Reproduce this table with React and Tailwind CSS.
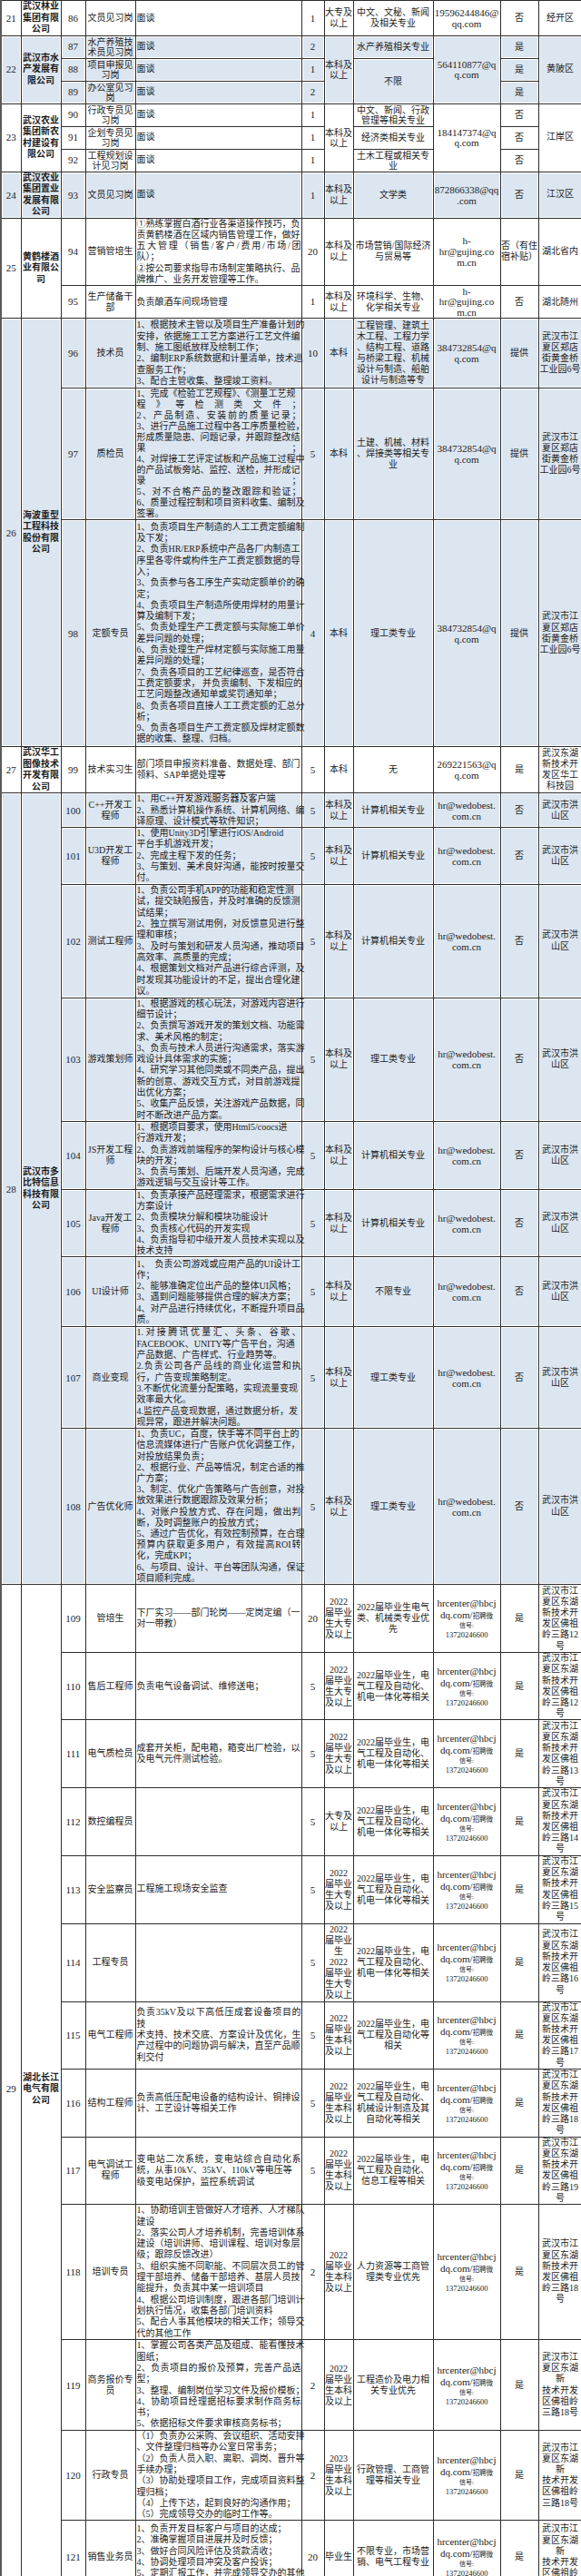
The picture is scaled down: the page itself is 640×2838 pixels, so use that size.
import React from "react";

// merged cell helper: text + rowSpan
const S = (t, s) => ({ t, s });
const HC = "HC";

const LOC29 = (n) => "武汉市江\n夏区东湖\n新技术开\n发区佛祖\n岭三路" + n + "\n号";
const LOC29B = (n) => "武汉市江\n夏区东湖\n新\n技术开发\n区佛祖岭\n三路" + n + "号";
const E22 = "2022\n届毕业\n生大专\n及以上";
const B22 = "2022\n届毕业\n生本科\n及以上";
const M_ELEC = "2022届毕业生，电\n气工程及自动化、\n机电一体化等相关";
const LOC26 = "武汉市江\n夏区郑店\n街黄金桥\n工业园6号";
const WEDO = "hr@wedobest.\ncom.cn";

const groups = [
  {
    no: 21,
    name: "武汉林业\n集团有限\n公司",
    rows: [
      { h: "h-[37px]", id: 86, job: "文员见习岗", desc: "面谈", n: "1", edu: "大专及\n以上", major: "中文、文秘、新闻\n及相关专业", email: "19596244846@\nqq.com", stay: "否", loc: "经开区" },
    ],
  },
  {
    no: 22,
    blue: true,
    name: "武汉市水\n产发展有\n限公司",
    rows: [
      { h: "h-[25px] leading-[11px]", id: 87, job: "水产养殖技\n术员见习岗", desc: "面谈", n: "2", edu: S("本科及\n以上", 3), major: "水产养殖相关专业", email: S("564110877@q\nq.com", 3), stay: "是", loc: S("黄陂区", 3) },
      { h: "h-[25px] leading-[11px]", id: 88, job: "项目申报见\n习岗", desc: "面谈", n: "1", edu: null, major: S("不限", 2), email: null, stay: "是", loc: null },
      { h: "h-[25px] leading-[11px]", id: 89, job: "办公室见习\n岗", desc: "面谈", n: "2", edu: null, major: null, email: null, stay: "是", loc: null },
    ],
  },
  {
    no: 23,
    name: "武汉农业\n集团新农\n村建设有\n限公司",
    rows: [
      { h: "h-[25px] leading-[11px]", id: 90, job: "行政专员见\n习岗", desc: "面谈", n: "1", edu: S("本科及\n以上", 3), major: "中文、新闻、行政\n管理等相关专业", email: S("184147374@q\nq.com", 3), stay: "否", loc: S("江岸区", 3) },
      { h: "h-[25px] leading-[11px]", id: 91, job: "企划专员见\n习岗", desc: "面谈", n: "1", edu: null, major: "经济类相关专业", email: null, stay: "否", loc: null },
      { h: "h-[25px] leading-[11px]", id: 92, job: "工程规划设\n计见习岗", desc: "面谈", n: "1", edu: null, major: "土木工程或相关专\n业", email: null, stay: "否", loc: null },
    ],
  },
  {
    no: 24,
    blue: true,
    name: "武汉农业\n集团置业\n发展有限\n公司",
    rows: [
      { h: "h-[50px]", id: 93, job: "文员见习岗", desc: "面谈", n: "1", edu: "本科及\n以上", major: "文学类", email: "872866338@qq\n.com", stay: "否", loc: "江汉区" },
    ],
  },
  {
    no: 25,
    name: "黄鹤楼酒\n业有限公\n司",
    rows: [
      {
        h: "h-[74px]", id: 94, job: "营销管培生",
        desc: "①熟练掌握白酒行业各渠道操作技巧，负\n责黄鹤楼酒在区域内销售管理工作，做好\n^五大管理（销售/客户/费用/市场/团\n队）；\n②按公司要求指导市场制定策略执行、品\n牌推广、业务开发管理等工作。",
        n: "20", edu: "本科及\n以上", major: "市场营销/国际经济\n与贸易等", email: "h-\nhr@gujing.co\nm.cn", stay: "否（有住\n宿补贴）", loc: "湖北省内",
      },
      { h: "h-[36px] leading-[11.5px]", id: 95, job: "生产储备干\n部", desc: "负责酿酒车间现场管理", n: "1", edu: "本科及\n以上", major: "环境科学、生物、\n化学相关专业", email: "h-\nhr@gujing.co\nm.cn", stay: "否", loc: "湖北随州" },
    ],
  },
  {
    no: 26,
    blue: true,
    name: "海波重型\n工程科技\n股份有限\n公司",
    rows: [
      {
        h: "h-[77px]", id: 96, job: "技术员",
        desc: "1、根据技术主管以及项目生产准备计划的\n安排，依据施工工艺方案进行工艺文件编\n制、施工图纸放样及绘制工作；\n2、编制ERP系统数据和计量清单，技术巡\n查服务工作；\n3、配合主管收集、整理竣工资料。",
        n: "10", edu: "本科", major: "工程管理、建筑土\n木工程、工程力学\n、结构工程、道路\n与桥梁工程、机械\n设计与制造、船舶\n设计与制造等专", email: "384732854@q\nq.com", stay: "提供", loc: LOC26,
      },
      {
        h: "h-[145px]", dl: "leading-[12px]", id: 97, job: "质检员",
        desc: "1、完成《检验工艺规程》、《测量工艺规\n^程》等检测类文件；\n^2、产品制造、安装前的质量记录；\n3、进行产品施工过程中各工序质量检验，\n形成质量隐患、问题记录，并跟踪整改结\n^果；\n4、对焊接工艺评定试板和产品施工过程中\n的产品试板旁站、监控、送检，并形成记\n^录；\n^5、对不合格产品的整改跟踪和验证；\n6、质量过程控制和项目资料收集、编制及\n签署。",
        n: "5", edu: "本科", major: "土建、机械、材料\n、焊接类等相关专\n业", email: "384732854@q\nq.com", stay: "提供", loc: LOC26,
      },
      {
        h: "h-[250px]", id: 98, job: "定额专员",
        desc: "1、负责项目生产制造的人工工费定额编制\n及下发；\n2、负责HR/ERP系统中产品各厂内制造工\n序里各零件或构件生产工费定额数据的导\n入；\n3、负责参与各工序生产实动定额单价的确\n定；\n4、负责项目生产制造所使用焊材的用量计\n算及编制下发；\n5、负责处理生产工费定额与实际施工单价\n差异问题的处理；\n6、负责处理生产焊材定额与实际施工用量\n差异问题的处理；\n7、负责各项目的工艺纪律巡查，是否符合\n工费定额要求， 并负责编制、下发相应的\n工艺问题整改通知单或奖罚通知单；\n8、负责各项目直接人工工费定额的汇总分\n析；\n9、负责各项目生产工费定额及焊材定额数\n据的收集、整理、归档。",
        n: "4", edu: "本科", major: "理工类专业", email: "384732854@q\nq.com", stay: "提供", loc: LOC26,
      },
    ],
  },
  {
    no: 27,
    name: "武汉华工\n图像技术\n开发有限\n公司",
    rows: [
      { h: "h-[49px]", id: 99, job: "技术实习生", desc: "部门项目申报资料准备、数据处理、部门\n领料、SAP单据处理等", n: "5", edu: "本科", major: "无", email: "269221563@q\nq.com", stay: "是", loc: "武汉东湖\n新技术开\n发区华工\n科技园" },
    ],
  },
  {
    no: 28,
    blue: true,
    name: "武汉市多\n比特信息\n科技有限\n公司",
    rows: [
      { h: "h-[37px]", id: 100, job: "C++开发工\n程师", desc: "1、用C++开发游戏服务器及客户端\n2、熟悉计算机操作系统、计算机网络、编\n译原理、设计模式等软件知识；", n: "5", edu: "本科及\n以上", major: "计算机相关专业", email: WEDO, stay: "否", loc: "武汉市洪\n山区" },
      { h: "h-[62px]", id: 101, job: "U3D开发工\n程师", desc: "1、使用Unity3D引擎进行iOS/Android\n平台手机游戏开发；\n2、完成主程下发的任务；\n3、与策划、美术良好沟通，能按时按量交\n付。", n: "5", edu: "本科及\n以上", major: "计算机相关专业", email: WEDO, stay: "否", loc: "武汉市洪\n山区" },
      {
        h: "h-[125px]", id: 102, job: "测试工程师",
        desc: "1、负责公司手机APP的功能和稳定性测\n试，提交缺陷报告，并及时准确的反馈测\n试结果；\n2、独立撰写测试用例，对反馈意见进行整\n理和审核；\n3、及时与策划和研发人员沟通，推动项目\n高效率、高质量的完成；\n4、根据策划文档对产品进行综合评测，及\n时发现其功能设计的不足，提出合理化建\n议。",
        n: "5", edu: "本科及\n以上", major: "计算机相关专业", email: WEDO, stay: "否", loc: "武汉市洪\n山区",
      },
      {
        h: "h-[135px]", id: 103, job: "游戏策划师",
        desc: "1、根据游戏的核心玩法，对游戏内容进行\n细节设计；\n2、负责撰写游戏开发的策划文档、功能需\n求、美术风格的制定；\n3、负责与技术人员进行沟通需求，落实游\n戏设计具体需求的实施；\n4、研究学习其他同类或不同类产品，提出\n新的创意、游戏交互方式，对目前游戏提\n出优化方案；\n5、收集产品反馈，关注游戏产品数据，同\n时不断改进产品方案。",
        n: "5", edu: "本科及\n以上", major: "理工类专业", email: WEDO, stay: "否", loc: "武汉市洪\n山区",
      },
      {
        h: "h-[74px]", id: 104, job: "JS开发工程\n师",
        desc: "1、根据项目要求，使用Html5/coocs进\n行游戏开发；\n2、负责游戏前端程序的架构设计与核心模\n块的开发；\n3、负责与策划、后端开发人员沟通，完成\n游戏逻辑与交互设计等工作。",
        n: "5", edu: "本科及\n以上", major: "计算机相关专业", email: WEDO, stay: "否", loc: "武汉市洪\n山区",
      },
      {
        h: "h-[74px]", id: 105, job: "Java开发工\n程师",
        desc: "1、负责承接产品经理需求，根据需求进行\n方案设计\n2、负责模块分解和模块功能设计\n3、负责核心代码的开发实现\n4、负责指导初中级开发人员技术实现以及\n技术支持",
        n: "5", edu: "本科及\n以上", major: "计算机相关专业", email: WEDO, stay: "否", loc: "武汉市洪\n山区",
      },
      {
        h: "h-[77px]", id: 106, job: "UI设计师",
        desc: "1、　负责公司游戏或应用产品的UI设计工\n作；\n2、能够准确定位出产品的整体UI风格；\n3、遇到问题能够提供合理的解决方案；\n4、对产品进行持续优化，不断提升项目品\n质。",
        n: "5", edu: "本科及\n以上", major: "不限专业", email: WEDO, stay: "否", loc: "武汉市洪\n山区",
      },
      {
        h: "h-[111px]", id: 107, job: "商业变现",
        desc: "^1.对接腾讯优量汇、头条、谷歌、\nFACEBOOK、UNITY等广告平台，沟通\n产品数据、广告样式、行业趋势等。\n^2.负责公司各产品线的商业化运营和执\n行，广告变现策略制定。\n3.不断优化流量分配策略，实现流量变现\n效率最大化。\n4.监控产品变现数据，通过数据分析，发\n现异常，跟进并解决问题。",
        n: "5", edu: "本科及\n以上", major: "理工类专业", email: WEDO, stay: "否", loc: "武汉市洪\n山区",
      },
      {
        h: "h-[172px]", dl: "leading-[12.2px]", id: 108, job: "广告优化师",
        desc: "1、负责UC，百度，快手等不同平台上的\n信息流媒体进行广告账户优化调整工作，\n对投放结果负责；\n2、根据行业、产品等情况，制定合适的推\n广方案；\n3、制定、优化广告策略与广告创意，对投\n放效果进行数据跟踪及效果分析；\n^4、对账户投放方式、存在问题，做出判\n断，及时调整账户的投放方式；\n5、通过广告优化，有效控制预算，在合理\n^预算内获取更多用户，有效提高ROI转\n化，完成KPI；\n6、与项目、设计、平台等团队沟通，保证\n项目顺利完成。",
        n: "5", edu: "本科及\n以上", major: "理工类专业", email: WEDO, stay: "否", loc: "武汉市洪\n山区",
      },
    ],
  },
  {
    no: 29,
    name: "湖北长江\n电气有限\n公司",
    rows: [
      { h: "h-[75px]", id: 109, job: "管培生", desc: "下厂实习——部门轮岗——定岗定编（一\n对一带教）", n: "20", edu: E22, major: "2022届毕业生电气\n类、机械类专业优\n先", email: HC, stay: "是", loc: LOC29("12") },
      { h: "h-[74px]", id: 110, job: "售后工程师", desc: "负责电气设备调试、维修送电；", n: "5", edu: E22, major: M_ELEC, email: HC, stay: "是", loc: LOC29("12") },
      { h: "h-[75px]", id: 111, job: "电气质检员", desc: "成套开关柜，配电箱，箱变出厂检验，以\n及电气元件测试检验。", n: "5", edu: E22, major: M_ELEC, email: HC, stay: "是", loc: LOC29("13") },
      { h: "h-[74px]", id: 112, job: "数控编程员", desc: "", n: "5", edu: "大专及\n以上", major: M_ELEC, email: HC, stay: "是", loc: LOC29("14") },
      { h: "h-[75px]", id: 113, job: "安全监察员", desc: "工程施工现场安全监查", n: "5", edu: E22, major: M_ELEC, email: HC, stay: "是", loc: LOC29("15") },
      { h: "h-[86px]", id: 114, job: "工程专员", desc: "", n: "5", edu: "2022\n届毕业\n生\n2022\n届毕业\n生大专\n及以上", major: M_ELEC, email: HC, stay: "是", loc: LOC29("16") },
      { h: "h-[74px]", id: 115, job: "电气工程师", desc: "^负责35kV及以下高低压成套设备项目的技\n^术支持、技术交底、方案设计及优化，生\n产过程中的问题协调与解决，直至产品顺\n利交付", n: "5", edu: B22, major: "2022届毕业生，电\n气工程及自动化等\n相关", email: HC, stay: "是", loc: LOC29("17") },
      { h: "h-[75px]", id: 116, job: "结构工程师", desc: "负责高低压配电设备的结构设计、铜排设\n计、工艺设计等相关工作", n: "5", edu: B22, major: "2022届毕业生，电\n气工程及自动化、\n机械设计制造及其\n自动化等相关", email: HC, stay: "是", loc: LOC29("18") },
      { h: "h-[74px]", id: 117, job: "电气调试工\n程师", desc: "^变电站二次系统，变电站综合自动化系\n统，从事10kV、35kV、110kV等电压等\n级变电站保护，监控系统调试", n: "5", edu: B22, major: "2022届毕业生，电\n气工程及自动化、\n信息工程等相关", email: HC, stay: "是", loc: LOC29("19") },
      {
        h: "h-[149px]", id: 118, job: "培训专员",
        desc: "1、协助培训主管做好人才培养、人才梯队\n建设\n2、落实公司人才培养机制，完善培训体系\n建设（培训讲师、培训课程、培训对象层\n级；跟踪反馈改进）\n3、组织实施不同职能、不同层次员工的管\n理干部培养、储备干部培养、基层人员技\n能提升，负责其中某一培训项目\n4、根据公司培训制度，跟进各部门培训计\n划执行情况，收集各部门培训资料\n5、配合人事其他模块的相关工作；领导交\n代的其他工作",
        n: "2", edu: B22, major: "人力资源等工商管\n理类专业优先", email: HC, stay: "是", loc: LOC29("18"),
      },
      {
        h: "h-[100px]", id: 119, job: "商务报价专\n员",
        desc: "1、掌握公司各类产品及组成、能看懂技术\n图纸；\n^2、负责项目的报价及预算，完善产品选\n型；\n3、整理、编制岗位学习文件及报价模板；\n^4、协助项目经理据招标要求制作商务标\n书；\n5、依据招标文件要求审核商务标书；",
        n: "2", edu: B22, major: "工程造价及电力相\n关专业优先", email: HC, stay: "是", loc: LOC29B("18"),
      },
      {
        h: "h-[98px]", id: 120, job: "行政专员",
        desc: "（1）负责办公采购、会议组织、活动安排\n、文件整理归档等办公室日常事务；\n（2）负责人员入职、离职、调岗、晋升等\n手续办理；\n（3）协助处理项目工作，完成项目资料整\n理归档；\n（4）上传下达，起到良好的沟通作用；\n（5）完成领导交办的临时工作等。",
        n: "2", edu: "2023\n届毕业\n生本科\n及以上", major: "行政管理、工商管\n理等相关专业", email: HC, stay: "是", loc: LOC29B("18"),
      },
      {
        h: "h-[80px]", id: 121, job: "销售业务员",
        desc: "1、负责开发目标客户与项目的达成；\n2、准确掌握项目进展并及时反馈；\n3、做好合同风险评估及货款清收；\n4、协调处理项目冲突及客户投诉；\n5、定期汇报工作，并完成领导交办的其他\n任务；",
        n: "20", edu: "毕业生", major: "不限专业，市场营\n销、电气工程专业", email: HC, stay: "是", loc: LOC29B("19"),
      },
    ],
  },
];

const Lines = ({ text }) =>
  text.split("\n").map((l, i) =>
    l.startsWith("^") ? (
      <div key={i} className="text-justify [text-align-last:justify]">{l.slice(1)}</div>
    ) : (
      <div key={i} className="whitespace-pre">{l}</div>
    )
  );

const HcEmail = () => (
  <div className="flex flex-col items-center">
    <div className="text-[11px] leading-[13px]">hrcenter@hbcj</div>
    <div className="text-[11px] leading-[13px]">
      dq.com/<span className="text-[7.5px]">招聘微</span>
    </div>
    <div className="text-[7px] leading-[9px]">信号:</div>
    <div className="text-[8.5px] leading-[10px]">13720246600</div>
  </div>
);

const base = "border border-[#2e2e2e] p-0 align-middle text-center";

function Cell({ v, className = "", children }) {
  if (v === null) return null;
  const span = typeof v === "object" ? v.s : 1;
  const text = typeof v === "object" ? v.t : v;
  return (
    <td rowSpan={span} className={`${base} ${className}`}>
      {children ? children(text) : <Lines text={text} />}
    </td>
  );
}

export default function App() {
  return (
    <div className="bg-white w-[640px]">
      <table className="table-fixed border-collapse w-[640px] text-[10px] leading-[12px] text-[#1c1c1c] font-['Liberation_Serif','Noto_Sans_CJK_SC',serif]">
        <colgroup>
          <col className="w-[22px]" />
          <col className="w-[44px]" />
          <col className="w-[27px]" />
          <col className="w-[55px]" />
          <col className="w-[183px]" />
          <col className="w-[25px]" />
          <col className="w-[32px]" />
          <col className="w-[88px]" />
          <col className="w-[74px]" />
          <col className="w-[42px]" />
          <col className="w-[48px]" />
        </colgroup>
        <tbody>
          {groups.map((g) =>
            g.rows.map((r, i) => {
              const bg = g.blue ? "bg-[#dce6f1] shadow-[inset_0_0_0_1px_#fff]" : "bg-white";
              return (
                <tr key={r.id} className={r.h}>
                  {i === 0 && (
                    <>
                      <td rowSpan={g.rows.length} className={`${base} ${bg} border-l-2 border-l-[#5a5a5a] text-[11px]`}>
                        {g.no}
                      </td>
                      <td rowSpan={g.rows.length} className={`${base} ${bg} font-bold leading-[12.5px]`}>
                        <Lines text={g.name} />
                      </td>
                    </>
                  )}
                  <Cell v={String(r.id)} className={`${bg} text-[11px]`} />
                  <Cell v={r.job} className={bg} />
                  <Cell v={r.desc} className={`${bg} !text-left pl-[1px] ${r.dl || "leading-[12.3px]"}`} />
                  <Cell v={r.n} className={`${bg} text-[11px]`} />
                  <Cell v={r.edu} className={bg} />
                  <Cell v={r.major} className={bg} />
                  <Cell v={r.email} className={`${bg} text-[11px]`}>
                    {(t) => (t === HC ? <HcEmail /> : <Lines text={t} />)}
                  </Cell>
                  <Cell v={r.stay} className={bg} />
                  <Cell v={r.loc} className={`${bg} leading-[12.2px]`} />
                </tr>
              );
            })
          )}
        </tbody>
      </table>
    </div>
  );
}
